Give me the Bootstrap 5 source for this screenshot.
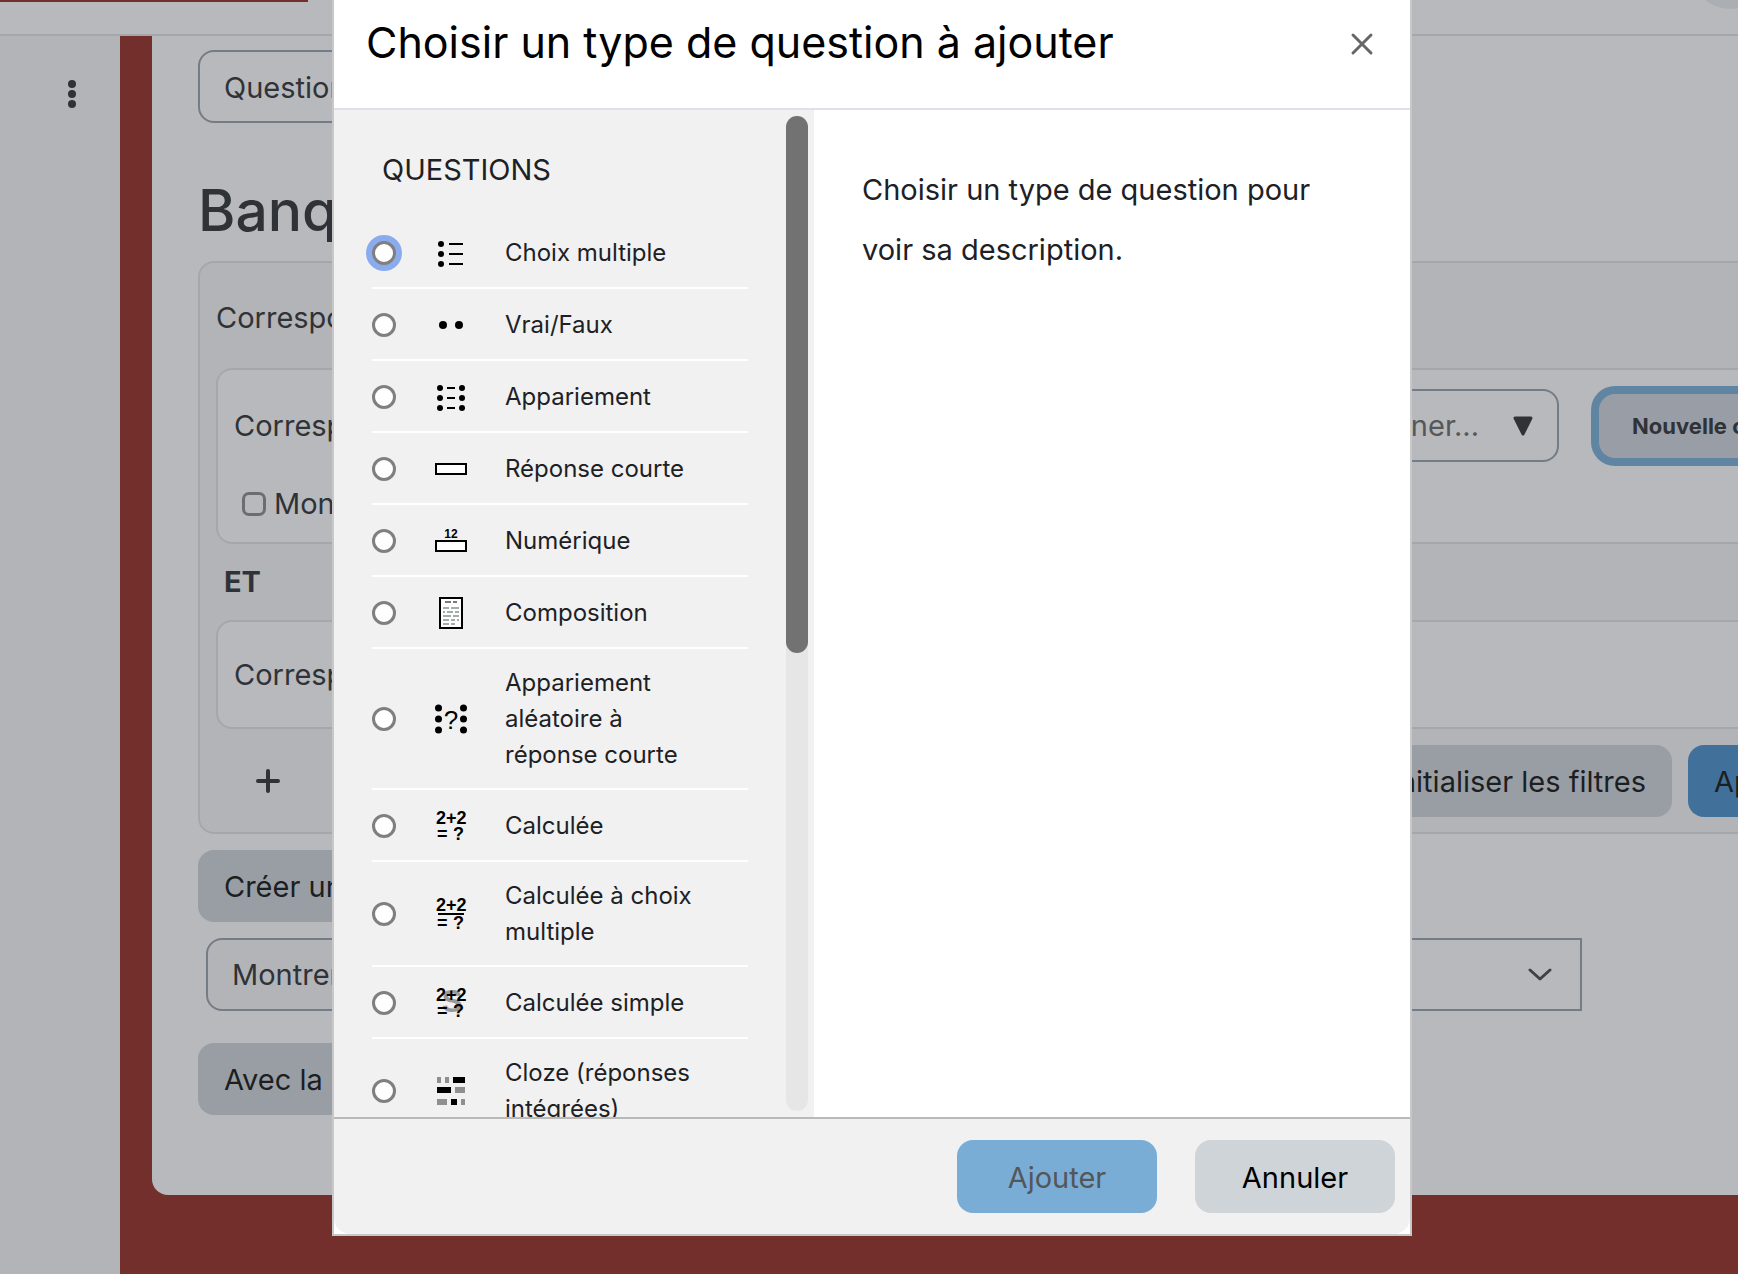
<!DOCTYPE html>
<html lang="fr">
<head>
<meta charset="utf-8">
<meta name="viewport" content="width=device-width, initial-scale=1">
<title>Banque de questions</title>
<link href="https://cdn.jsdelivr.net/npm/bootstrap@5.3.0/dist/css/bootstrap.min.css" rel="stylesheet">
<style>
  body { font-family: Inter, "Liberation Sans", sans-serif; font-size: 29px; line-height: 44px; color: #2f3337; background: #b8b9bc; overflow: hidden; }
  .page-shell { height: 100vh; overflow: hidden; }
  .top-bar { height: 36px; border-bottom: 2px solid #a6a7aa; }
  .top-accent { width: 308px; height: 2px; background: #722f2c; }
  .side-drawer { width: 120px; background: #b3b4b8; padding: 36px 0 0 24px; }
  .drawer-menu { display: block; width: 96px; height: 30px; margin-top: 7px; }
  .red-area { background: #722f2c; padding-left: 32px; min-width: 0; overflow: hidden; }
  .sheet { background: #b8b9bc; border-radius: 0 0 0 16px; padding: 14px 0 80px 46px; margin-right: -160px; }
  .field-box { height: 73px; border: 2px solid #747c86; border-radius: 16px; background-color: transparent; color: inherit; font-size: 29px; line-height: 44px; padding: 0 24px; }
  .plain-select { appearance: none; width: 420px; padding-top: 2px; }
  .page-heading { font-size: 57px; line-height: 72px; font-weight: 500; margin: 52px 0 14px; }
  .filter-box { background: #b3b4b8; border: 2px solid #a6a7aa; border-radius: 16px; padding: 0 16px; height: 573px; margin-bottom: 16px; }
  .filter-intro { padding: 33px 0 28px; }
  .filter-card { background: #b8b9bc; border: 2px solid #a6a7aa; border-radius: 16px; padding: 0 16px; }
  .card-one { height: 176px; padding-top: 19px; }
  .card-two { height: 109px; }
  .joiner { font-weight: 700; line-height: 76px; padding-left: 8px; }
  .picker { width: 1084px; margin-left: 54px; padding-right: 18px; gap: 28px; color: #55575a; }
  .new-condition { margin-left: 40px; height: 64px; border: 0; border-radius: 16px; background: #999da5; box-shadow: 0 0 0 8px #6085a3; color: #2f3337; font-size: 22px; font-weight: 700; padding: 0 33px; white-space: nowrap; }
  .tick { appearance: none; width: 24px; height: 24px; border: 3px solid #6c6d6f; border-radius: 7px; margin: 0; background: transparent; }
  .tick-row { padding-left: 8px; margin-top: 20px; gap: 8px; }
  .tail-row { padding: 16px 0 0 38px; }
  .tail-right { width: 1390px; }
  .btn-soft { background: #999ea5; color: #1c1f22; border: 0; border-radius: 16px; font-size: 29px; line-height: 44px; padding: 15px 26px 13px; white-space: nowrap; height: 72px; }
  .btn-apply { background: #41719a; }
  .show-row { margin: 16px 0 32px 8px; width: 1376px; }
  .show-label { background: #b3b4b8; border-radius: 16px 0 0 16px; }
  .show-select { border-radius: 0; margin-left: -2px; appearance: none; color: transparent; }
  .show-field { display: grid; }
  .show-field > * { grid-area: 1 / 1; }
  .show-field > svg { justify-self: end; align-self: center; margin-right: 30px; pointer-events: none; }

  .modal { padding-left: 6px; overflow: hidden; }
  .modal-dialog { max-width: 1080px; margin: 0 auto; }
  .modal-content { border: 2px solid #c8c8c9; border-top: 0; border-radius: 0; color: #1d2125; }
  .modal-header { height: 110px; border-bottom: 2px solid #dee2e6; border-radius: 0; padding: 0 36px 24px 32px; }
  .modal-title { font-size: 43px; line-height: 60px; font-weight: 400; color: #000; }
  .close-x { border: 0; background: none; padding: 4px 0 0; line-height: 0; }
  .chooser { height: calc(100vh - 267px); }
  .type-pane { width: 480px; background: #f1f1f1; padding: 6px 6px 6px 0; }
  .type-list { overflow-y: auto; scrollbar-width: none; padding: 32px 38px 0; margin: -6px 0; }
  .type-list::-webkit-scrollbar { display: none; }
  .group-name { font-size: 29px; line-height: 44px; font-weight: 400; padding: 6px 0 0 10px; margin: 0 0 25px; }
  .type-row { min-height: 72px; padding: 16px 44px 15px 0; border-bottom: 2px solid #fff; font-size: 24px; line-height: 36px; cursor: pointer; }
  .type-row input { appearance: none; flex: none; width: 24px; height: 24px; border: 3px solid #7f7f7f; border-radius: 50%; background: #fff; margin: 0 39px 0 0; }
  .type-row input.is-focused { box-shadow: 0 0 0 6px #8aacee; }
  .type-row svg { flex: none; width: 32px; height: 32px; margin-right: 38px; overflow: visible; }
  .type-row text { font-family: "Liberation Sans", sans-serif; font-weight: 700; font-size: 18px; }
  .scroll-track { width: 22px; background: #e6e6e6; border-radius: 11px; }
  .scroll-thumb { height: 54%; background: #727272; border-radius: 11px; }
  .type-help { padding: 50px 48px; line-height: 60px; }
  .modal-footer { background: #f1f1f1; border-top: 2px solid #b9b9b9; border-radius: 0 0 16px 16px; padding: 21px 15px; gap: 38px; }
  .modal-footer .btn { width: 200px; height: 73px; margin: 0; padding: 8px 12px 6px; border: 0; border-radius: 16px; font-size: 29px; color: #000; background: #cfd4d8; }
  .modal-footer .btn-add:disabled { background: #7aadd5; color: #545659; opacity: 1; }
</style>
</head>
<body>
<div class="page-shell d-flex flex-column">
  <header class="top-bar d-flex justify-content-between align-items-start flex-shrink-0">
    <div class="top-accent"></div>
    <svg width="36" height="10" viewBox="0 0 36 10" aria-hidden="true"><circle cx="28" cy="-30" r="39" fill="#abafb4"/></svg>
  </header>
  <div class="d-flex flex-grow-1">
    <aside class="side-drawer flex-shrink-0">
      <svg class="drawer-menu" viewBox="0 0 96 30" role="img" aria-label="Menu"><g fill="#2f3337"><circle cx="48" cy="5" r="4"/><circle cx="48" cy="15" r="4"/><circle cx="48" cy="25" r="4"/></g></svg>
    </aside>
    <main class="red-area flex-grow-1">
      <div class="sheet">
        <select class="field-box plain-select d-block" aria-label="Navigation"><option>Questions</option></select>
        <h1 class="page-heading">Banque de questions</h1>
        <section class="filter-box">
          <div class="filter-intro">Correspondre à tous les critères suivants</div>
          <div class="filter-card card-one">
            <div class="d-flex align-items-center">
              <span class="flex-shrink-0">Correspond à</span>
              <div class="field-box picker d-flex align-items-center justify-content-end flex-shrink-0">
                <span>Taper ou sélectionner...</span>
                <svg width="32" height="22" viewBox="0 0 32 22" aria-hidden="true"><path d="M8 3H24L16 19Z" fill="#2f3337" stroke="#2f3337" stroke-width="3" stroke-linejoin="round"/></svg>
              </div>
              <button class="new-condition" type="button">Nouvelle condition</button>
            </div>
            <div class="tick-row d-flex align-items-center"><input class="tick" type="checkbox" id="sub"><label for="sub">Montrer aussi les sous-catégories</label></div>
          </div>
          <div class="joiner">ET</div>
          <div class="filter-card card-two d-flex align-items-center">Correspond à</div>
          <div class="tail-row d-flex align-items-center">
            <svg class="flex-shrink-0" width="28" height="28" viewBox="0 0 28 28" role="img" aria-label="Ajouter une condition"><path d="M14 4V24M4 14H24" stroke="#2f3337" stroke-width="4" stroke-linecap="round"/></svg>
            <div class="tail-right d-flex justify-content-end gap-3 flex-shrink-0">
              <button class="btn-soft" type="button">Réinitialiser les filtres</button>
            </div>
            <button class="btn-soft btn-apply ms-3" type="button">Appliquer les filtres</button>
          </div>
        </section>
        <button class="btn-soft d-block" type="button">Créer une question</button>
        <div class="show-row d-flex">
          <label class="show-label field-box d-flex align-items-center flex-shrink-0" for="show">Montrer le texte de la question</label>
          <div class="show-field flex-grow-1">
            <select class="field-box show-select" id="show"><option>Non</option></select>
            <svg width="24" height="16" viewBox="0 0 24 16" aria-hidden="true"><path d="M2 3L12 12L22 3" fill="none" stroke="#3d4247" stroke-width="3" stroke-linecap="round" stroke-linejoin="round"/></svg>
          </div>
        </div>
        <button class="btn-soft d-block" type="button">Avec la sélection</button>
      </div>
    </main>
  </div>
</div>

<div class="modal d-block" role="dialog" aria-labelledby="chooser-title">
  <div class="modal-dialog">
    <form class="modal-content">
      <div class="modal-header d-flex justify-content-between align-items-center">
        <h2 class="modal-title" id="chooser-title">Choisir un type de question à ajouter</h2>
        <button class="close-x" type="button" aria-label="Fermer"><svg width="24" height="24" viewBox="0 0 24 24"><path d="M3 3L21 21M21 3L3 21" stroke="#666" stroke-width="3" stroke-linecap="round"/></svg></button>
      </div>
      <div class="chooser d-flex">
        <div class="type-pane d-flex flex-shrink-0">
          <div class="type-list flex-grow-1">
            <h3 class="group-name">QUESTIONS</h3>
            <label class="type-row d-flex align-items-center"><input class="is-focused" type="radio" name="qtype">
              <svg viewBox="0 0 32 32"><circle cx="6" cy="7" r="3"/><circle cx="6" cy="17" r="3"/><circle cx="6" cy="27" r="3"/><path d="M14 7H28M14 17H28M14 27H28" stroke="#000" stroke-width="2"/></svg><span>Choix multiple</span></label>
            <label class="type-row d-flex align-items-center"><input type="radio" name="qtype">
              <svg viewBox="0 0 32 32"><circle cx="8" cy="16" r="4"/><circle cx="24" cy="16" r="4"/></svg><span>Vrai/Faux</span></label>
            <label class="type-row d-flex align-items-center"><input type="radio" name="qtype">
              <svg viewBox="0 0 32 32"><circle cx="5" cy="7" r="3"/><circle cx="5" cy="17" r="3"/><circle cx="5" cy="27" r="3"/><circle cx="27" cy="7" r="3"/><circle cx="27" cy="17" r="3"/><circle cx="27" cy="27" r="3"/><path d="M12 7H20M12 17H20M12 27H20" stroke="#000" stroke-width="2"/></svg><span>Appariement</span></label>
            <label class="type-row d-flex align-items-center"><input type="radio" name="qtype">
              <svg viewBox="0 0 32 32"><rect x="1" y="11" width="30" height="10" fill="#fff" stroke="#000" stroke-width="2"/></svg><span>Réponse courte</span></label>
            <label class="type-row d-flex align-items-center"><input type="radio" name="qtype">
              <svg viewBox="0 0 32 32"><text x="16" y="13" text-anchor="middle" style="font-size:12px">12</text><rect x="1" y="16" width="30" height="10" fill="#fff" stroke="#000" stroke-width="2"/></svg><span>Numérique</span></label>
            <label class="type-row d-flex align-items-center"><input type="radio" name="qtype">
              <svg viewBox="0 0 32 32"><rect x="5" y="1" width="22" height="30" fill="#fff" stroke="#000" stroke-width="2"/><path d="M10 5H16M18 5H22" stroke="#7a7a7a" stroke-width="2"/><path d="M8 11H14M16 11H24M8 15H10M12 15H18M20 15H24M8 19H16M18 19H24M8 23H14M16 23H20M22 23H24M8 27H14M16 27H20" stroke="#a3adab" stroke-width="2"/></svg><span>Composition</span></label>
            <label class="type-row d-flex align-items-center"><input type="radio" name="qtype">
              <svg viewBox="0 0 32 32"><circle cx="3.5" cy="5" r="3.5"/><circle cx="3.5" cy="16" r="3.5"/><circle cx="3.5" cy="27" r="3.5"/><circle cx="28.5" cy="5" r="3.5"/><circle cx="28.5" cy="16" r="3.5"/><circle cx="28.5" cy="27" r="3.5"/><text x="16" y="26" text-anchor="middle" style="font-size:26px;font-weight:400">?</text></svg><span>Appariement aléatoire à réponse courte</span></label>
            <label class="type-row d-flex align-items-center"><input type="radio" name="qtype">
              <svg viewBox="0 0 32 32"><text x="1" y="14">2+2</text><text x="2" y="30">=</text><text x="18" y="30">?</text></svg><span>Calculée</span></label>
            <label class="type-row d-flex align-items-center"><input type="radio" name="qtype">
              <svg viewBox="0 0 32 32"><text x="1" y="13">2+2</text><path d="M3 16H29" stroke="#000" stroke-width="2"/><text x="2" y="31">=</text><text x="18" y="31">?</text></svg><span>Calculée à choix multiple</span></label>
            <label class="type-row d-flex align-items-center"><input type="radio" name="qtype">
              <svg viewBox="0 0 32 32"><text x="17" y="25" text-anchor="middle" fill="#999" style="font-size:31px">S</text><text x="1" y="14">2+2</text><text x="2" y="30">=</text><text x="18" y="30">?</text></svg><span>Calculée simple</span></label>
            <label class="type-row d-flex align-items-center"><input type="radio" name="qtype">
              <svg viewBox="0 0 32 32"><path d="M18 2H30V8H18ZM2 12H16V18H2ZM16 24H22V30H16Z"/><path fill="#8f8f8f" d="M2 2H6V8H2ZM10 2H14V8H10ZM20 12H30V18H20ZM2 24H12V30H2ZM26 24H30V30H26Z"/></svg><span>Cloze (réponses intégrées)</span></label>
          </div>
          <div class="scroll-track flex-shrink-0"><div class="scroll-thumb"></div></div>
        </div>
        <div class="type-help">Choisir un type de question pour voir sa description.</div>
      </div>
      <div class="modal-footer">
        <button class="btn btn-add" type="submit" disabled>Ajouter</button>
        <button class="btn" type="button">Annuler</button>
      </div>
    </form>
  </div>
</div>
<script src="https://cdn.jsdelivr.net/npm/bootstrap@5.3.0/dist/js/bootstrap.bundle.min.js"></script>
</body>
</html>
